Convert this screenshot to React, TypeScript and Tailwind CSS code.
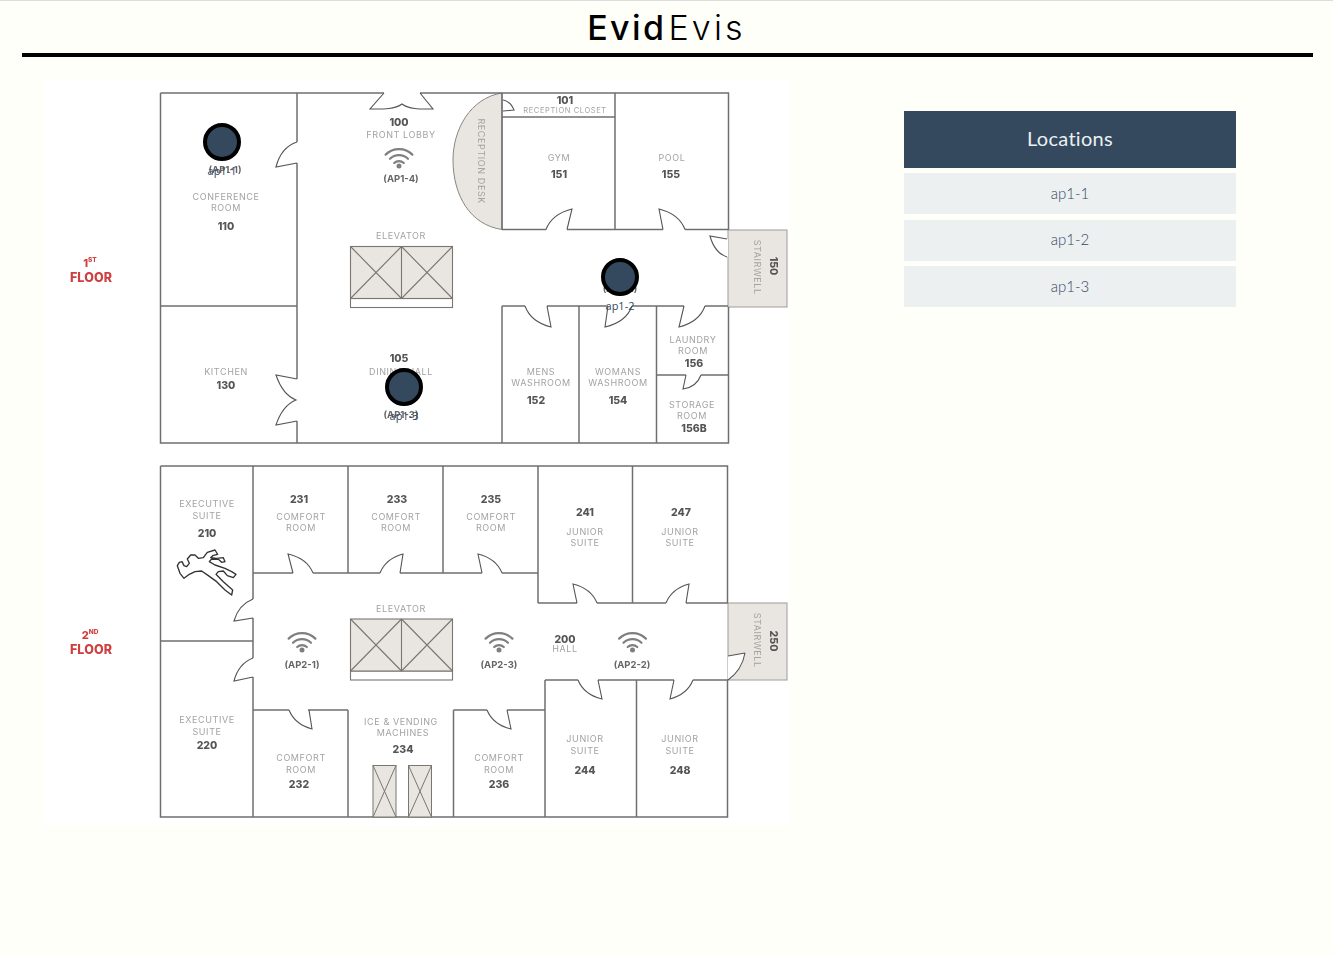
import React from "react";

type Label = [number, number, string];

// room names, light grey caps
const names: Label[] = [
  [401, 135, "FRONT LOBBY"], [559, 158, "GYM"], [672, 158, "POOL"],
  [226, 197, "CONFERENCE"], [226, 208, "ROOM"], [401, 236, "ELEVATOR"],
  [226, 372, "KITCHEN"], [401, 372, "DINING HALL"],
  [541, 372, "MENS"], [541, 383, "WASHROOM"], [618, 372, "WOMANS"], [618, 383, "WASHROOM"],
  [693, 340, "LAUNDRY"], [693, 351, "ROOM"], [692, 405, "STORAGE"], [692, 416, "ROOM"],
  [207, 504, "EXECUTIVE"], [207, 516, "SUITE"],
  [301, 517, "COMFORT"], [301, 528, "ROOM"], [396, 517, "COMFORT"], [396, 528, "ROOM"],
  [491, 517, "COMFORT"], [491, 528, "ROOM"],
  [585, 532, "JUNIOR"], [585, 543, "SUITE"], [680, 532, "JUNIOR"], [680, 543, "SUITE"],
  [401, 609, "ELEVATOR"], [565, 649, "HALL"],
  [207, 720, "EXECUTIVE"], [207, 732, "SUITE"], [301, 758, "COMFORT"], [301, 770, "ROOM"],
  [401, 722, "ICE & VENDING"], [403, 733, "MACHINES"], [499, 758, "COMFORT"], [499, 770, "ROOM"],
  [585, 739, "JUNIOR"], [585, 751, "SUITE"], [680, 739, "JUNIOR"], [680, 751, "SUITE"],
];

// room numbers and access point tags, bold
const numbers: Label[] = [
  [399, 122, "100"], [565, 100, "101"], [559, 174, "151"], [671, 174, "155"],
  [226, 226, "110"], [226, 385, "130"], [399, 358, "105"],
  [536, 400, "152"], [618, 400, "154"], [694, 363, "156"], [694, 428, "156B"],
  [299, 499, "231"], [397, 499, "233"], [491, 499, "235"], [585, 512, "241"], [681, 512, "247"],
  [207, 533, "210"], [565, 639, "200"], [207, 745, "220"], [299, 784, "232"], [403, 749, "234"],
  [499, 784, "236"], [585, 770, "244"], [680, 770, "248"],
];

const tags: Label[] = [
  [225, 169, "(AP1-1)"], [401, 178, "(AP1-4)"], [620, 288, "(AP1-2)"], [401, 414, "(AP1-3)"],
  [302, 664, "(AP2-1)"], [499, 664, "(AP2-3)"], [632, 664, "(AP2-2)"],
];

const walls = [
  // first floor shell
  "M160.5 93H384M420 93H728.5V230M160.5 93V443H728.5V307",
  "M297 93V142M297 163V379M297 421V443M160.5 306H297",
  "M502 93V229.5M502 306V443M502 117H615M615 93V229.5",
  "M502 229.5H546M567 229.5H663M685 229.5H728",
  "M502 306H525M547 306H608M632 306H684M705 306H728",
  "M579 306V443M656.5 306V443M656.5 375H686M701 375H728",
  // second floor shell
  "M160.5 466H727.5V603M160.5 466V817H727.5V680M160.5 641H253",
  "M253 466V599M253 618V658M253 677V817",
  "M348 466V573M443 466V573M538 466V603M632.5 466V603",
  "M253 573H293M313 573H380M400 573H482M502 573H538",
  "M538 603H577M597 603H666M686 603H728",
  "M253 710H289M308 710H348M348 710V817M453.5 710V817M453.5 710H487M507 710H545",
  "M545 680H578M598 680H674M693 680H728M545 680V817M636.5 680V817",
];

const doors = [
  "M297 142C285 146 279 155 276 167L297 163",
  "M297 379L276 375C280 387 286 396 296 400C286 404 280 413 276 425L297 421",
  "M384 93L370 109C380 109 394 110 402 104C410 110 423 109 433 109L420 93",
  "M503 100C508 101 512 105 514 110L503 111",
  "M546 229.5C550 219 560 212 572 209L567 229.5",
  "M685 229.5C681 219 671 212 659 209L663 229.5",
  "M727 239L710 236C713 247 718 254 727 257",
  "M525 306C529 317 539 324 551 327L547 306",
  "M632 306C628 317 618 324 605 327L608 306",
  "M705 306C701 317 691 324 679 327L684 306",
  "M686 375L683 389C691 388 698 383 701 375",
  "M293 573L288 554C301 557 309 563 313 573",
  "M380 573C384 563 392 557 403 554L400 573",
  "M482 573L478 554C490 557 498 563 502 573",
  "M577 603L573 584C585 587 593 593 597 603",
  "M666 603C670 593 678 587 689 584L686 603",
  "M253 599C243 603 237 610 234 621L253 618",
  "M253 658C243 662 237 669 234 681L253 677",
  "M289 710C293 720 301 726 312 729L309 710",
  "M487 710C491 720 499 726 511 729L507 710",
  "M578 680C582 690 590 696 602 699L598 680",
  "M693 680C689 690 681 696 670 699L674 680",
];

const Elevator = ({ y }: { y: number }) => (
  <g stroke="#7a7672" strokeWidth="1.1">
    <rect x="350.5" y={y + 52} width="102" height="9" fill="#fff" />
    <rect x="350.5" y={y} width="102" height="52" fill="#e9e5e0" />
    <path d={`M401.5 ${y}V${y + 52}M350.5 ${y}L401.5 ${y + 52}M401.5 ${y}L350.5 ${y + 52}M401.5 ${y}L452.5 ${y + 52}M452.5 ${y}L401.5 ${y + 52}`} fill="none" />
  </g>
);

const Wifi = ({ x, y }: { x: number; y: number }) => (
  <g transform={`translate(${x} ${y})`} fill="none" stroke="#7f7f7f" strokeWidth="2.2" strokeLinecap="round">
    <path d="M-13.4 -11.4A19 19 0 0 1 13.4 -11.4" />
    <path d="M-9 -7.2A13 13 0 0 1 9 -7.2" />
    <path d="M-4.8 -3A7 7 0 0 1 4.8 -3" />
    <circle cx="0" cy="0" r="1.4" fill="#7f7f7f" />
  </g>
);

const Vending = ({ x }: { x: number }) => (
  <g stroke="#7a7672" strokeWidth="1">
    <rect x={x} y="765.5" width="23" height="51.5" fill="#e9e5e0" />
    <path d={`M${x} 765.5L${x + 23} 817M${x + 23} 765.5L${x} 817`} fill="none" />
  </g>
);

const FloorLabel = ({ y, num, sup }: { y: number; num: string; sup: string }) => (
  <g className="font-['Inter'] font-extrabold" fill="#cf3f3f" textAnchor="middle" dominantBaseline="central">
    <text x="90" y={y - 14} fontSize="11">
      {num}
      <tspan fontSize="6.5" dy="-3">{sup}</tspan>
    </text>
    <text x="91" y={y} fontSize="12.5" letterSpacing="0.1">FLOOR</text>
  </g>
);

const FloorPlan = () => (
  <svg viewBox="44 80 746 746" className="block h-[746px] w-[746px] bg-white blur-[0.5px]">
    {/* reception desk + stairwells sit under the walls */}
    <path d="M502 93C470 98 453 130 453 160C453 195 470 225 502 229.5Z" fill="#e9e5e0" stroke="#8a8683" strokeWidth="1" />
    <rect x="728" y="230" width="59" height="77" fill="#e9e5e0" stroke="#a09c98" strokeWidth="1" />
    <rect x="728" y="603" width="59" height="77" fill="#e9e5e0" stroke="#a09c98" strokeWidth="1" />
    <path d="M728 239L710 236C713 247 718 254 728 257Z" fill="#fff" />
    <path d="M728 656L745 653C743 664 738 673 728 680Z" fill="#fff" />

    <path d={walls.join("")} fill="none" stroke="#6f6f6f" strokeWidth="1.5" />
    <path d={doors.join("")} fill="none" stroke="#555" strokeWidth="1.1" />
    <path d="M745 653L728 656M745 653C743 664 738 673 728 680" fill="none" stroke="#555" strokeWidth="1.1" />

    <Elevator y={246.5} />
    <Elevator y={619} />
    <Vending x={373} />
    <Vending x={408.5} />

    <Wifi x={399} y={166} />
    <Wifi x={302} y={650} />
    <Wifi x={499} y={650} />
    <Wifi x={632.5} y={650} />

    {/* chalk outline in room 210 */}
    <path
      transform="translate(170 545) scale(0.3333)"
      d="M22 62L28 52L36 50L42 62L50 65L58 55L52 42L62 30L75 30L85 40L100 38L112 22L135 15L143 28L128 32L122 38L140 40L160 38L165 50L155 52L145 43L125 42L118 50L135 60L165 70L185 80L198 88L190 98L172 92L160 78L145 80L138 88L160 110L188 135L185 150L165 135L140 110L115 92L95 78L75 80L58 88L42 100L30 85Z"
      fill="#fff"
      stroke="#333"
      strokeWidth="4"
      strokeLinejoin="round"
    />

    <g transform="translate(0 -0.8)" className="font-['Inter']" fill="#a3a3a3" fontSize="9" letterSpacing="0.6" textAnchor="middle" dominantBaseline="central">
      {names.map(([x, y, t], i) => (
        <text key={i} x={x} y={y}>{t}</text>
      ))}
      <text x="565" y="111" fontSize="7.5">RECEPTION CLOSET</text>
      <text transform="translate(481 162) rotate(90)" fontSize="9">RECEPTION DESK</text>
      <text transform="translate(757 268) rotate(90)" fontSize="9">STAIRWELL</text>
      <text transform="translate(757 641) rotate(90)" fontSize="9">STAIRWELL</text>
    </g>
    <g className="font-['Inter'] font-extrabold" fill="#555" fontSize="10.5" textAnchor="middle" dominantBaseline="central">
      {numbers.map(([x, y, t], i) => (
        <text key={i} x={x} y={y}>{t}</text>
      ))}
      <text transform="translate(773 266) rotate(90)">150</text>
      <text transform="translate(773 641) rotate(90)">250</text>
    </g>
    <g className="font-['Inter'] font-bold" fill="#666" fontSize="9.5" textAnchor="middle" dominantBaseline="central">
      {tags.map(([x, y, t], i) => (
        <text key={i} x={x} y={y}>{t}</text>
      ))}
    </g>

    <FloorLabel y={277} num="1" sup="ST" />
    <FloorLabel y={649} num="2" sup="ND" />
  </svg>
);

const Pin = ({ label, className }: { label: string; className: string }) => (
  <div className={`absolute flex w-[38px] flex-col items-center ${className}`}>
    <div className="h-[38px] w-[38px] shrink-0 rounded-full border-4 border-black bg-[#34495e]" />
    <span className="mt-[2px] whitespace-nowrap font-['Open_Sans'] text-[11px] leading-4 text-[#34495e]">{label}</span>
  </div>
);

const locations = ["ap1-1", "ap1-2", "ap1-3"];

export default function App() {
  return (
    <div className="min-h-screen border-t border-t-[#dddddd] bg-[#fffffa]">
      <header className="flex h-[52px] items-center justify-center font-['Inter'] text-[34px] text-black">
        <span className="font-medium tracking-[2.4px]">Evid</span>
        <span className="ml-[2px] font-light tracking-[3.2px]">Evis</span>
      </header>
      <div className="ml-[22px] mr-[20px] h-[4px] bg-black" />

      <main className="flex pl-[44px] pt-[23px]">
        <div className="relative h-[746px] w-[746px] shrink-0">
          <FloorPlan />
          <Pin label="ap1-1" className="left-[159px] top-[43px]" />
          <Pin label="ap1-2" className="left-[557px] top-[178px]" />
          <Pin label="ap1-3" className="left-[341px] top-[288px]" />
        </div>

        <aside className="ml-[114px] mt-[31px] flex w-[332px] flex-col gap-[5.25px] font-['Lato'] text-center">
          <div className="flex h-[57px] items-center justify-center bg-[#34495e] pb-[3px] text-[20px] tracking-[0.3px] text-[#ecf0f1]">Locations</div>
          {locations.map((name) => (
            <div key={name} className="flex h-[41px] items-center justify-center bg-[#ecf0f1] pb-[1px] text-[15px] font-light text-[#34495e]">
              {name}
            </div>
          ))}
        </aside>
      </main>
    </div>
  );
}
